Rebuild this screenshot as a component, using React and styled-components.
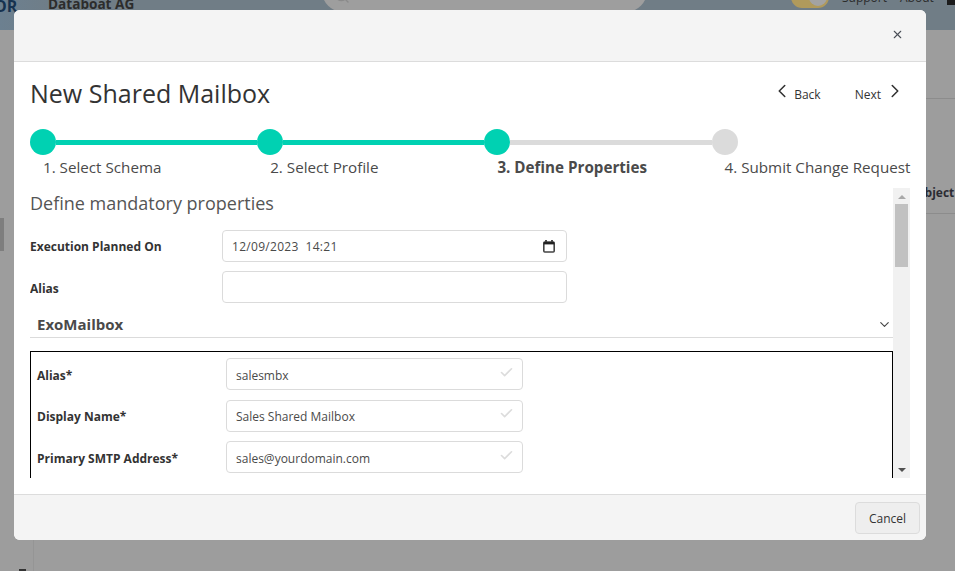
import React from "react";
import styled, { createGlobalStyle } from "styled-components";
import { Check, ChevronDown, ChevronLeft, ChevronRight, Search, X } from "lucide-react";

const steps = [
    { label: "1. Select Schema", done: true, barDone: true },
    { label: "2. Select Profile", done: true, barDone: true },
    { label: "3. Define Properties", done: true, barDone: false, current: true },
    { label: "4. Submit Change Request", done: false, last: true },
];

const mailboxFields = [
    { label: "Alias*", value: "salesmbx" },
    { label: "Display Name*", value: "Sales Shared Mailbox" },
    { label: "Primary SMTP Address*", value: "sales@yourdomain.com" },
];

export default function App() {
    return (
        <Page>
            <GlobalStyle />
            <TopBar>
                <Logo>OR</Logo>
                <Company>Databoat AG</Company>
                <SearchPill>
                    <Search size={16} strokeWidth={2} color="#8a8a8a" />
                </SearchPill>
                <Toggle />
                <TopLink>Support</TopLink>
                <TopLink>About</TopLink>
                <Bell />
            </TopBar>
            <BehindRule />
            <BehindHead>Object</BehindHead>
            <BehindTab />
            <BehindColumn />
            <BehindGlyph />

            <Modal>
                <ModalHeader>
                    <CloseButton>
                        <X size={13} strokeWidth={2} />
                    </CloseButton>
                </ModalHeader>

                <ModalBody>
                    <TitleRow>
                        <Title>New Shared Mailbox</Title>
                        <NavLink>
                            <ChevronLeft size={22} strokeWidth={1.7} />
                            <NavLabel>Back</NavLabel>
                        </NavLink>
                        <NavLink $next>
                            <NavLabel>Next</NavLabel>
                            <ChevronRight size={22} strokeWidth={1.7} />
                        </NavLink>
                    </TitleRow>

                    <Stepper>
                        {steps.map((step) => (
                            <Step key={step.label}>
                                <StepTrack>
                                    <Dot $done={step.done} />
                                    {!step.last && <Bar $done={step.barDone} />}
                                </StepTrack>
                                <StepLabel $current={step.current}>{step.label}</StepLabel>
                            </Step>
                        ))}
                    </Stepper>

                    <ScrollArea>
                        <ScrollContent>
                            <Heading>Define mandatory properties</Heading>
                            <FieldRow>
                                <FieldLabel>Execution Planned On</FieldLabel>
                                <InputBox $wide>
                                    <DateText>12/09/2023&nbsp;&nbsp;14:21</DateText>
                                    <svg width="12" height="13" viewBox="0 0 12 13">
                                        <path d="M3 0v2M9 0v2" stroke="#1e1e1e" strokeWidth="1.6" />
                                        <rect x="0.8" y="2" width="10.4" height="10" rx="1" fill="none" stroke="#444" strokeWidth="1.6" />
                                        <rect x="0.8" y="2" width="10.4" height="2.4" fill="#222" />
                                    </svg>
                                </InputBox>
                            </FieldRow>
                            <FieldRow>
                                <FieldLabel $low>Alias</FieldLabel>
                                <InputBox $wide />
                            </FieldRow>

                            <SectionHeader>
                                <SectionTitle>ExoMailbox</SectionTitle>
                                <ChevronDown size={15} strokeWidth={1.8} color="#444" />
                            </SectionHeader>

                            <SectionBox>
                                {mailboxFields.map((field) => (
                                    <BoxRow key={field.label}>
                                        <BoxLabel>{field.label}</BoxLabel>
                                        <InputBox>
                                            <InputText>{field.value}</InputText>
                                            <CheckMark>
                                                <Check size={15} strokeWidth={2.6} color="#dcdcdc" />
                                            </CheckMark>
                                        </InputBox>
                                    </BoxRow>
                                ))}
                            </SectionBox>
                        </ScrollContent>

                        <Scrollbar>
                            <ScrollArrow />
                            <ScrollThumb />
                            <ScrollArrow $down />
                        </Scrollbar>
                    </ScrollArea>
                </ModalBody>

                <ModalFooter>
                    <CancelButton>Cancel</CancelButton>
                </ModalFooter>
            </Modal>
        </Page>
    );
}

const GlobalStyle = createGlobalStyle`
    html, body {
        margin: 0;
        padding: 0;
        height: 100%;
        overflow: hidden;
        background: #9d9d9d;
    }

    * {
        box-sizing: border-box;
    }
`;

const Page = styled.div`
    position: relative;
    width: 955px;
    height: 571px;
    overflow: hidden;
    background: #9d9d9d;
    font-family: "Open Sans", "Noto Sans", sans-serif;
    color: #333;
`;

const TopBar = styled.div`
    position: relative;
    display: flex;
    align-items: flex-end;
    height: 30px;
    background: linear-gradient(90deg, #6c8090 0, #707d86 60px, #707d86 100%);
`;

const Logo = styled.div`
    position: absolute;
    left: -6px;
    top: -5px;
    font-size: 16px;
    font-weight: 700;
    color: #16324f;
`;

const Company = styled.div`
    position: absolute;
    left: 48px;
    top: -6px;
    font-size: 13.6px;
    font-weight: 700;
    color: #2c2c2c;
`;

const SearchPill = styled.div`
    position: absolute;
    left: 322px;
    top: -30px;
    display: flex;
    align-items: flex-end;
    width: 325px;
    height: 42px;
    padding: 0 0 8px 12px;
    border-radius: 21px;
    background: #9e9e9e;
`;

const Toggle = styled.div`
    position: absolute;
    left: 791px;
    top: -14px;
    width: 38px;
    height: 22px;
    border-radius: 11px;
    background: #b09a5c;

    &::after {
        content: "";
        position: absolute;
        right: 2px;
        top: 2px;
        width: 18px;
        height: 18px;
        border-radius: 50%;
        background: #a3a3a3;
    }
`;

const TopLink = styled.span`
    position: absolute;
    top: -11px;
    left: ${(p) => (p.children === "Support" ? "842px" : "900px")};
    font-size: 12px;
    color: #2b2b2b;
`;

const Bell = styled.div`
    position: absolute;
    left: 947px;
    top: 0;
    width: 8px;
    height: 5px;
    background: #1c1c1c;
`;

const BehindRule = styled.div`
    position: absolute;
    left: 926px;
    right: 0;
    top: 98px;
    height: 1px;
    background: #8c8c8c;

    &::after {
        content: "";
        position: absolute;
        left: 0;
        right: 0;
        top: 115px;
        height: 1px;
        background: #8c8c8c;
    }
`;

const BehindHead = styled.div`
    position: absolute;
    left: 915px;
    top: 184px;
    width: 40px;
    font-size: 12px;
    font-weight: 700;
    color: #2b2b33;
    white-space: nowrap;
`;

const BehindTab = styled.div`
    position: absolute;
    left: 0;
    top: 218px;
    width: 4px;
    height: 33px;
    background: #7e7e7e;
`;

const BehindColumn = styled.div`
    position: absolute;
    left: 33px;
    top: 540px;
    bottom: 0;
    width: 1px;
    background: #959595;
`;

const BehindGlyph = styled.div`
    position: absolute;
    left: 19px;
    top: 569px;
    width: 7px;
    height: 2px;
    background: #333;
`;

const Modal = styled.div`
    position: absolute;
    left: 14px;
    top: 10px;
    display: flex;
    flex-direction: column;
    width: 912px;
    height: 530px;
    border-radius: 6px;
    overflow: hidden;
    background: #fff;
`;

const ModalHeader = styled.div`
    display: flex;
    align-items: center;
    justify-content: flex-end;
    flex: none;
    height: 52px;
    padding: 0 22px 3px 0;
    background: #f4f4f4;
    border-bottom: 1px solid #dcdcdc;
`;

const CloseButton = styled.div`
    display: flex;
    color: #4a4f57;
`;

const ModalBody = styled.div`
    flex: 1;
    min-height: 0;
    padding: 0 16px;
`;

const TitleRow = styled.div`
    display: flex;
    align-items: center;
    height: 67px;
    padding-bottom: 6px;
`;

const Title = styled.h1`
    flex: 1;
    margin: 0;
    font-size: 25px;
    font-weight: 500;
    color: #333;
`;

const NavLink = styled.div`
    display: flex;
    align-items: center;
    gap: ${(p) => (p.$next ? "3px" : "1px")};
    margin-left: ${(p) => (p.$next ? "34px" : "0")};
    padding-right: ${(p) => (p.$next ? "4px" : "0")};
    color: #333;

    svg {
        margin-top: -3px;
    }
`;

const NavLabel = styled.span`
    font-size: 12px;
    line-height: 16px;
    padding-top: 4px;
`;

const Stepper = styled.div`
    display: grid;
    grid-template-columns: repeat(4, 227.2px);
    height: 59px;
`;

const Step = styled.div`
    display: flex;
    flex-direction: column;
`;

const StepTrack = styled.div`
    display: flex;
    align-items: center;
    height: 26px;
`;

const Dot = styled.div`
    flex: none;
    width: 26px;
    height: 26px;
    border-radius: 50%;
    background: ${(p) => (p.$done ? "#00d1b2" : "#dbdbdb")};
`;

const Bar = styled.div`
    flex: 1;
    height: 5px;
    background: ${(p) => (p.$done ? "#00d1b2" : "#dbdbdb")};
`;

const StepLabel = styled.div`
    margin-top: 2px;
    padding-left: 13px;
    font-size: 15.2px;
    line-height: 20px;
    font-weight: ${(p) => (p.$current ? 700 : 400)};
    color: #4a4a4a;
    white-space: nowrap;
`;

const ScrollArea = styled.div`
    display: flex;
    height: 290px;
    overflow: hidden;
`;

const ScrollContent = styled.div`
    flex: 1;
    min-width: 0;
    overflow: hidden;
`;

const Heading = styled.h2`
    margin: 0 0 12px;
    font-size: 18px;
    line-height: 30px;
    font-weight: 400;
    color: #555;
`;

const FieldRow = styled.div`
    display: flex;
    align-items: center;
    margin-bottom: 9px;
`;

const FieldLabel = styled.label`
    flex: none;
    width: 192px;
    padding-top: ${(p) => (p.$low ? "2px" : "0")};
    font-size: 12px;
    font-weight: 700;
    color: #333;
`;

const InputBox = styled.div`
    display: flex;
    align-items: center;
    justify-content: space-between;
    flex: none;
    width: ${(p) => (p.$wide ? "345px" : "297px")};
    height: 32px;
    padding: ${(p) => (p.$wide ? "0 11px 0 9px" : "0 8px 0 9px")};
    border: 1px solid #dbdbdb;
    border-radius: 4px;
    background: #fff;
`;

const InputText = styled.span`
    padding-top: 2px;
    font-size: 12px;
    color: #4a4a4a;
`;

const DateText = styled.span`
    font-size: 12px;
    letter-spacing: 0.3px;
    color: #4a4a4a;
`;

const CheckMark = styled.span`
    display: flex;
    margin-top: -4px;
`;

const SectionHeader = styled.div`
    display: flex;
    align-items: center;
    justify-content: space-between;
    height: 35px;
    margin-top: -9px;
    padding: 8px 1px 0 7px;
    border-bottom: 1px solid #dbdbdb;
`;

const SectionTitle = styled.div`
    font-size: 15px;
    font-weight: 700;
    color: #4a4a4a;
`;

const SectionBox = styled.div`
    margin-top: 13px;
    padding: 6px 6px 20px;
    border: 1px solid #000;
`;

const BoxRow = styled.div`
    display: flex;
    align-items: center;
    margin-bottom: 9.5px;
`;

const BoxLabel = styled.label`
    flex: none;
    width: 189px;
    padding-top: 2px;
    font-size: 12px;
    font-weight: 700;
    color: #333;
`;

const Scrollbar = styled.div`
    display: flex;
    flex-direction: column;
    align-items: center;
    flex: none;
    width: 17px;
    background: #f1f1f1;
`;

const ScrollArrow = styled.div`
    flex: none;
    width: 0;
    height: 0;
    margin: ${(p) => (p.$down ? "auto 0 6px" : "7px 0 5px")};
    border-left: 4px solid transparent;
    border-right: 4px solid transparent;
    border-bottom: ${(p) => (p.$down ? "0" : "4px solid #a8a8a8")};
    border-top: ${(p) => (p.$down ? "4px solid #505050" : "0")};
`;

const ScrollThumb = styled.div`
    flex: none;
    width: 13px;
    height: 63px;
    background: #c1c1c1;
`;

const ModalFooter = styled.div`
    display: flex;
    align-items: center;
    justify-content: flex-end;
    flex: none;
    height: 46px;
    padding: 0 6px 0 0;
    background: #f4f4f4;
    border-top: 1px solid #dcdcdc;
`;

const CancelButton = styled.button`
    width: 65px;
    height: 32px;
    padding: 2px 0 0;
    border: 1px solid #dcdcdc;
    border-radius: 4px;
    background: #eeeeee;
    font-family: inherit;
    font-size: 12px;
    color: #333;
`;
